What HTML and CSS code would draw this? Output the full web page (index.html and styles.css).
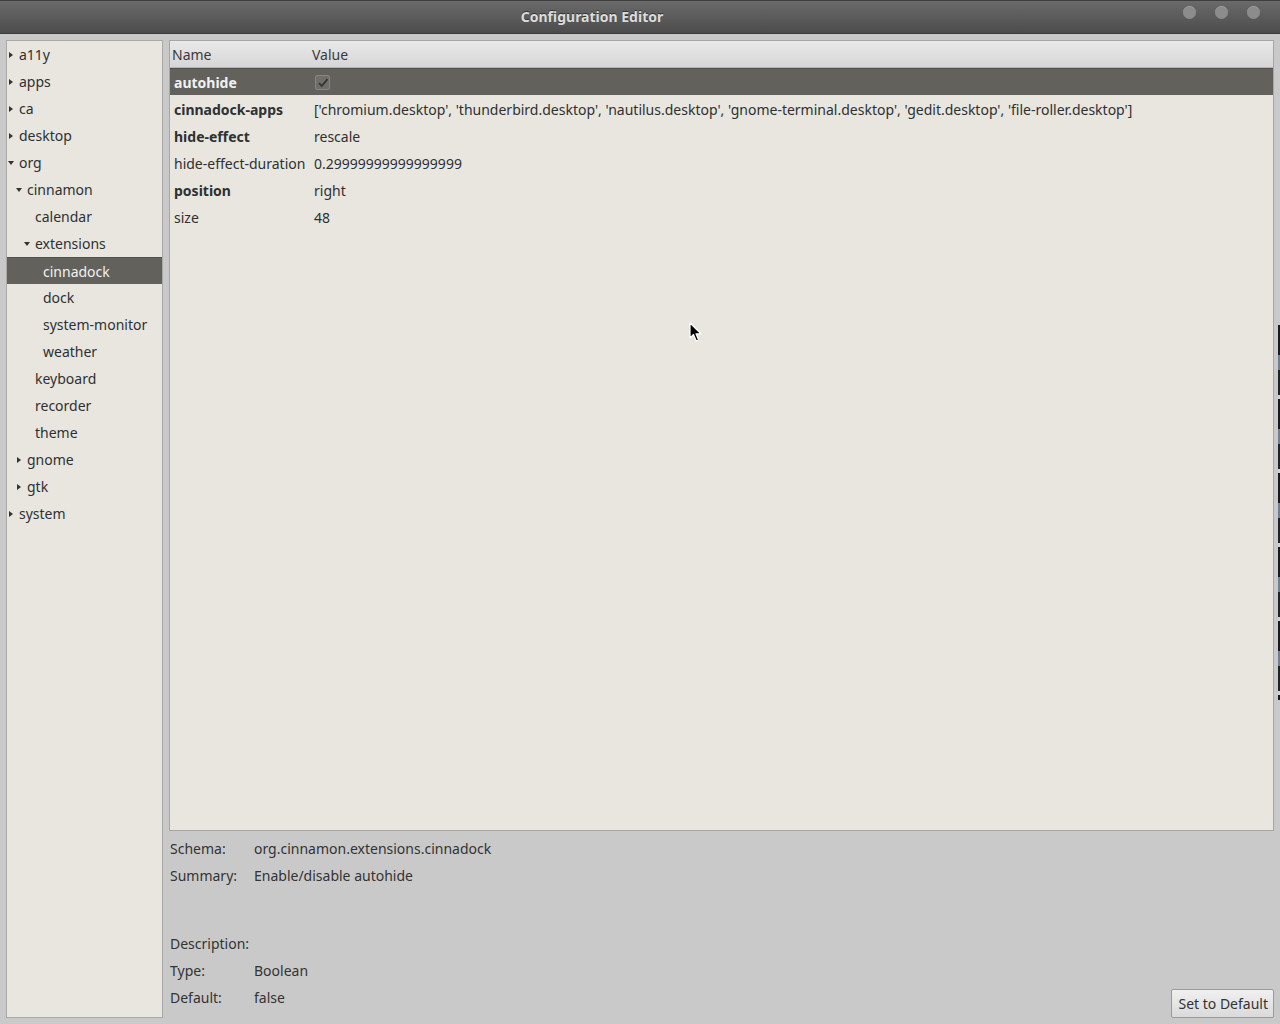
FILE: index.html
```html
<!DOCTYPE html>
<html>
<head>
<meta charset="utf-8">
<title>Configuration Editor</title>
<link rel="stylesheet" href="styles.css">
</head>
<body>
<div class="window">
  <header class="titlebar">
    <span class="title">Configuration Editor</span>
    <div class="wm-buttons"><span class="wm-btn"></span><span class="wm-btn"></span><span class="wm-btn"></span></div>
  </header>
  <div class="main">
    <aside class="tree">
      <div class="node lvl0"><span class="exp closed"></span>a11y</div>
      <div class="node lvl0"><span class="exp closed"></span>apps</div>
      <div class="node lvl0"><span class="exp closed"></span>ca</div>
      <div class="node lvl0"><span class="exp closed"></span>desktop</div>
      <div class="node lvl0"><span class="exp open"></span>org</div>
      <div class="node lvl1"><span class="exp open"></span>cinnamon</div>
      <div class="node lvl2"><span class="exp"></span>calendar</div>
      <div class="node lvl2"><span class="exp open"></span>extensions</div>
      <div class="node lvl3 selected"><span class="exp"></span>cinnadock</div>
      <div class="node lvl3"><span class="exp"></span>dock</div>
      <div class="node lvl3"><span class="exp"></span>system-monitor</div>
      <div class="node lvl3"><span class="exp"></span>weather</div>
      <div class="node lvl2"><span class="exp"></span>keyboard</div>
      <div class="node lvl2"><span class="exp"></span>recorder</div>
      <div class="node lvl2"><span class="exp"></span>theme</div>
      <div class="node lvl1"><span class="exp closed"></span>gnome</div>
      <div class="node lvl1"><span class="exp closed"></span>gtk</div>
      <div class="node lvl0"><span class="exp closed"></span>system</div>
    </aside>
    <section class="content">
      <div class="keys">
        <div class="keys-head"><span class="hname">Name</span><span class="hvalue">Value</span></div>
        <div class="krow selected"><span class="kname bold">autohide</span><span class="kval"><span class="check"><svg width="12" height="12" viewBox="0 0 12 12"><path d="M2 6.2 L4.8 9 L10.5 2.2" fill="none" stroke="#333331" stroke-width="1.8"/></svg></span></span></div>
        <div class="krow"><span class="kname bold">cinnadock-apps</span><span class="kval">['chromium.desktop', 'thunderbird.desktop', 'nautilus.desktop', 'gnome-terminal.desktop', 'gedit.desktop', 'file-roller.desktop']</span></div>
        <div class="krow"><span class="kname bold">hide-effect</span><span class="kval">rescale</span></div>
        <div class="krow"><span class="kname">hide-effect-duration</span><span class="kval">0.29999999999999999</span></div>
        <div class="krow"><span class="kname bold">position</span><span class="kval">right</span></div>
        <div class="krow"><span class="kname">size</span><span class="kval">48</span></div>
      </div>
      <div class="info">
        <div class="info-grid">
          <span class="lbl">Schema:</span><span class="val">org.cinnamon.extensions.cinnadock</span>
          <span class="lbl">Summary:</span><span class="val">Enable/disable autohide</span>
          <span class="spacer"></span>
          <span class="lbl">Description:</span><span class="val"></span>
          <span class="lbl">Type:</span><span class="val">Boolean</span>
          <span class="lbl">Default:</span><span class="val">false</span>
        </div>
        <button class="btn">Set to Default</button>
      </div>
    </section>
  </div>
  <div class="edge-strip"></div>
  <svg class="cursor" width="14" height="22" viewBox="0 0 14 22"><path d="M1 1 L1 16 L4.5 12.5 L7.2 19 L9.6 18 L7 11.8 L12 11.8 Z" fill="#000" stroke="#fff" stroke-width="1.2" stroke-linejoin="round"/></svg>
</div>
</body>
</html>
```
FILE: styles.css
```css
* { box-sizing: border-box; }
html, body { margin: 0; padding: 0; }
body {
  width: 1280px;
  height: 1024px;
  overflow: hidden;
  background: #c9c9c9;
  font-family: "Noto Sans", "DejaVu Sans", sans-serif;
  font-size: 14px;
  color: #2e3132;
}
.window {
  position: relative;
  width: 1280px;
  height: 1024px;
  display: flex;
  flex-direction: column;
}
.titlebar {
  height: 34px;
  flex: none;
  display: flex;
  align-items: center;
  justify-content: center;
  position: relative;
  padding-right: 96px;
  padding-bottom: 2px;
  background: linear-gradient(#6a6a6a, #4c4c4c);
  border-top: 1px solid #3e3e3e;
  border-bottom: 1px solid #3a3a3a;
}
.title {
  color: #dcdcdc;
  font-weight: bold;
  font-size: 14px;
  text-shadow: 0 -1px 0 #333;
}
.wm-buttons {
  position: absolute;
  right: 20px;
  top: 5px;
  display: flex;
  gap: 19px;
}
.wm-btn {
  width: 13px;
  height: 13px;
  border-radius: 50%;
  background: #8c8c8c;
  box-shadow: inset 0 1px 0 #9a9a9a;
}
.main {
  flex: 1;
  display: flex;
  gap: 6px;
  padding: 6px;
  min-height: 0;
}
.tree {
  width: 157px;
  flex: none;
  background: #e8e6df;
  border: 1px solid #a9a9a7;
}
.node {
  height: 27px;
  display: flex;
  align-items: center;
  white-space: nowrap;
}
.node.lvl0 { padding-left: 1px; }
.node.lvl1 { padding-left: 9px; }
.node.lvl2 { padding-left: 17px; }
.node.lvl3 { padding-left: 25px; }
.exp {
  width: 11px;
  height: 27px;
  flex: none;
  position: relative;
}
.exp.closed::before {
  content: "";
  position: absolute;
  left: 1px;
  top: 11px;
  border-left: 4px solid #333;
  border-top: 3px solid transparent;
  border-bottom: 3px solid transparent;
}
.exp.open::before {
  content: "";
  position: absolute;
  left: 0px;
  top: 12px;
  border-top: 4px solid #333;
  border-left: 3px solid transparent;
  border-right: 3px solid transparent;
}
.node.selected {
  background: #62615c;
  border-top: 1px solid #52514d;
  color: #f2f2f2;
}
.content {
  flex: 1;
  display: flex;
  flex-direction: column;
  min-width: 0;
}
.keys {
  height: 791px;
  flex: none;
  background: #e8e6df;
  border: 1px solid #a6a6a4;
}
.keys-head {
  height: 27px;
  display: flex;
  align-items: center;
  padding-top: 1px;
  background: linear-gradient(#e9e9e9, #d6d6d6);
  border-bottom: 1px solid #b5b5b5;
  color: #3a3a3a;
}
.hname { width: 142px; padding-left: 2px; }
.krow {
  height: 27px;
  display: flex;
  align-items: center;
  white-space: nowrap;
  padding-top: 1px;
}
.kname { width: 140px; padding-left: 4px; flex: none; }
.kval { padding-left: 4px; }
.bold { font-weight: bold; }
.krow.selected {
  background: #62615c;
  border-top: 1px solid #52514d;
  color: #f2f2f2;
  padding-top: 0;
}
.check {
  display: block;
  width: 15px;
  height: 15px;
  margin-left: 1px;
  border: 1px solid #858581;
  border-radius: 2px;
  background: #6f6e6a;
  padding: 1px;
}
.check svg { display: block; }
.info {
  flex: 1;
  display: flex;
  justify-content: space-between;
  align-items: flex-end;
  padding-top: 4px;
}
.info-grid {
  align-self: flex-start;
  display: grid;
  grid-template-columns: 84px auto;
  grid-template-rows: 27px 27px 41px 27px 27px 27px;
  align-items: center;
  padding-left: 1px;
  color: #333;
}
.spacer { grid-column: 1 / 3; }
.btn {
  height: 29px;
  padding: 0 5px 0 6px;
  font-family: inherit;
  font-size: 14px;
  color: #333;
  background: linear-gradient(#f0f0f0, #dadada);
  border: 1px solid #9a9a9a;
  border-radius: 2px;
}
.edge-strip {
  position: absolute;
  right: 0;
  top: 325px;
  width: 2px;
  height: 375px;
  background: repeating-linear-gradient(#1a1a1a 0 30px, #6c7f95 30px 45px, #222 45px 70px, #d0d0d0 70px 74px);
}
.cursor {
  position: absolute;
  left: 689px;
  top: 322px;
}
```
